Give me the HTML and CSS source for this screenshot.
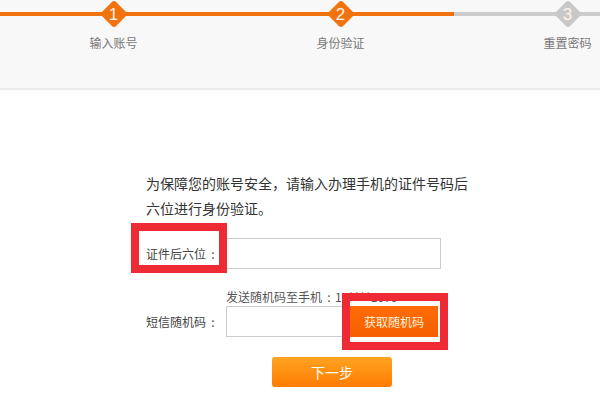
FILE: index.html
```
<!DOCTYPE html>
<html lang="zh-CN">
<head>
<meta charset="utf-8">
<title>身份验证</title>
<link rel="stylesheet" href="styles.css">
</head>
<body>
<div class="page">
  <header class="steps">
    <div class="steps-track">
      <div class="step done">
        <span class="badge"><span class="num">1</span></span>
        <span class="step-label">输入账号</span>
      </div>
      <div class="step done">
        <span class="badge"><span class="num">2</span></span>
        <span class="step-label">身份验证</span>
      </div>
      <div class="step todo">
        <span class="badge"><span class="num">3</span></span>
        <span class="step-label">重置密码</span>
      </div>
    </div>
  </header>
  <main class="content">
    <p class="intro">为保障您的账号安全，请输入办理手机的证件号码后六位进行身份验证。</p>
    <div class="row row-id">
      <label class="row-label">证件后六位<span class="colon">:</span></label>
      <input class="field" type="text">
      <span class="mark mark-label"></span>
    </div>
    <div class="hint">发送随机码至手机<span class="colon">:</span>13****1070</div>
    <div class="row row-sms">
      <label class="row-label">短信随机码<span class="colon">:</span></label>
      <input class="field field-short" type="text">
      <button class="get-code" type="button">获取随机码</button>
      <span class="mark mark-btn"></span>
    </div>
    <button class="next" type="button">下一步</button>
  </main>
</div>
</body>
</html>
```
FILE: styles.css
```
html, body {
  margin: 0;
  padding: 0;
  background: #ffffff;
}
body {
  font-family: "Noto Sans CJK SC", "Noto Sans", sans-serif;
  color: #333;
  width: 600px;
  height: 398px;
  overflow: hidden;
}
.page {
  width: 600px;
}
.steps {
  height: 88px;
  background: #f8f8f8;
  border-bottom: 2px solid #ececec;
  overflow: hidden;
  box-shadow: 0 3px 4px rgba(0,0,0,0.02);
}
.steps-track {
  display: flex;
  width: 681px;
}
.step {
  width: 227px;
  display: flex;
  flex-direction: column;
  align-items: center;
  background-repeat: no-repeat;
  background-position: 0 12px;
  background-size: 100% 4px;
}
.step.done {
  background-image: linear-gradient(#f0730f, #f0730f);
}
.step.todo {
  background-image: linear-gradient(#cccccc, #cccccc);
}
.badge {
  width: 20px;
  height: 20px;
  margin-top: 4px;
  transform: rotate(45deg);
  display: flex;
  align-items: center;
  justify-content: center;
  border-radius: 3px;
}
.done .badge { background: #f0730f; }
.todo .badge { background: #c8c8c8; }
.num {
  transform: rotate(-45deg);
  color: #fff3e6;
  font-family: "Liberation Sans", sans-serif;
  font-size: 17px;
  line-height: 17px;
}
.step-label {
  margin-top: 11px;
  font-size: 12px;
  line-height: 16px;
  color: #777;
}
.content {
  padding: 81px 0 0 146px;
}
.intro {
  margin: 0;
  width: 325px;
  font-size: 14px;
  line-height: 25px;
  color: #333;
}
.colon {
  display: inline-block;
  width: 12px;
  text-align: center;
  padding-left: 1px;
}
.row {
  position: relative;
  display: flex;
  align-items: center;
}
.row-id {
  margin-top: 17px;
}
.row-label {
  width: 80px;
  font-size: 12px;
  line-height: 16px;
  color: #444;
}
.field {
  box-sizing: border-box;
  width: 215px;
  height: 31px;
  margin: 0;
  border: 1px solid #cccccc;
  background: #fff;
  outline: none;
}
.field-short {
  width: 124px;
}
.hint {
  margin: 19px 0 0 80px;
  font-size: 12px;
  line-height: 18px;
  color: #555;
}
.get-code {
  box-sizing: border-box;
  width: 88px;
  height: 31px;
  margin: 0;
  border: none;
  background: linear-gradient(#ff6c05, #f75f00);
  color: #fff3dc;
  font-family: inherit;
  font-size: 12px;
  line-height: 16px;
  padding: 0;
}
.next {
  display: block;
  box-sizing: border-box;
  width: 120px;
  height: 30px;
  margin: 20px 0 0 126px;
  border: none;
  border-radius: 3px;
  background: linear-gradient(#ffa322, #ff7c02);
  color: #fff;
  font-family: inherit;
  font-size: 14px;
  line-height: 18px;
  padding: 0;
}
.mark {
  position: absolute;
  box-sizing: border-box;
  border: 8px solid #ee2a35;
  pointer-events: none;
}
.mark-label {
  left: -15px;
  top: -15px;
  width: 96px;
  height: 50px;
}
.mark-btn {
  left: 196px;
  top: -13px;
  width: 106px;
  height: 57px;
}
```
